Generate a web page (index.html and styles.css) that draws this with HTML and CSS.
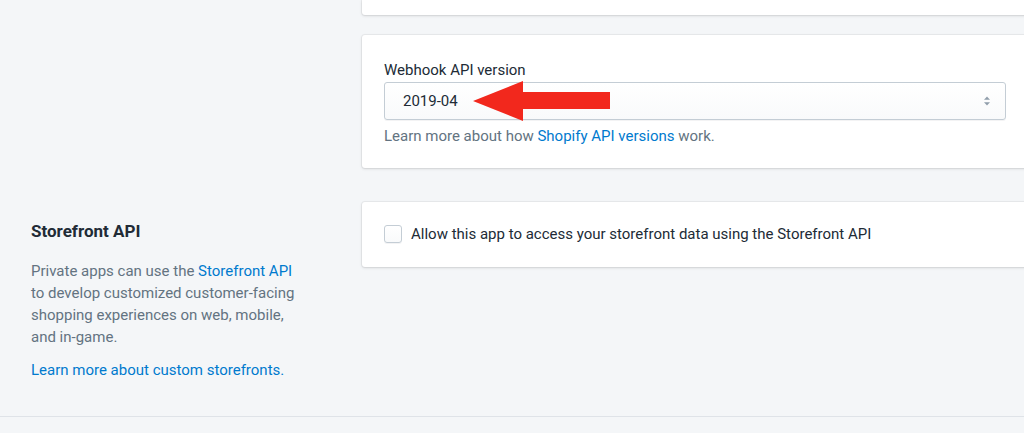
FILE: index.html
```html
<!DOCTYPE html>
<html lang="en">
<head>
<meta charset="utf-8">
<title>Private app settings</title>
<link rel="stylesheet" href="styles.css">
</head>
<body>
<div class="page">
  <section class="section section-top">
    <div class="annotation"></div>
    <div class="stack">
      <div class="card card-cut"></div>
      <div class="card card-body">
        <label class="label">Webhook API version</label>
        <div class="select-wrap">
          <div class="select">
            <span class="select-value">2019-04</span>
            <svg class="select-icon" width="8" height="12" viewBox="0 0 8 12"><path d="M4 1.5 L7 4.8 H1 Z" fill="#919eab"/><path d="M4 10.5 L7 7.2 H1 Z" fill="#919eab"/></svg>
          </div>
          <svg class="red-arrow" width="140" height="41" viewBox="0 0 140 41"><polygon points="0,20 50,0 50,11 137,11 137,28 50,28 50,40" fill="#f2281d"/></svg>
        </div>
        <p class="help">Learn more about how <a href="#" class="link">Shopify API versions</a> work.</p>
      </div>
    </div>
  </section>

  <section class="section section-storefront">
    <div class="annotation">
      <h2 class="heading">Storefront API</h2>
      <p class="desc">Private apps can use the <a href="#" class="link">Storefront API</a> to develop customized customer-facing shopping experiences on web, mobile, and in-game.</p>
      <p class="desc"><a href="#" class="link">Learn more about custom storefronts.</a></p>
    </div>
    <div class="stack">
      <div class="card card-check">
        <label class="check">
          <span class="checkbox"></span>
          <span class="check-label">Allow this app to access your storefront data using the Storefront API</span>
        </label>
      </div>
    </div>
  </section>
</div>
<div class="footer"></div>
</body>
</html>
```

FILE: styles.css
```css
html, body {
  margin: 0;
  padding: 0;
  overflow: hidden;
}
body {
  background: #f4f6f8;
  font-family: Roboto, "Noto Sans", Arial, sans-serif;
  font-size: 15px;
  line-height: 20px;
  color: #212b36;
  width: 1024px;
  height: 433px;
}
.page {
  padding-left: 31px;
  height: 416px;
  box-sizing: border-box;
}
.section {
  display: grid;
  grid-template-columns: 331px 666px;
}
.stack {
  display: flex;
  flex-direction: column;
  gap: 20px;
}
.card {
  background: #fff;
  border-radius: 3px;
  box-shadow: 0 0 0 1px rgba(63, 63, 68, 0.06), 0 1px 3px 0 rgba(63, 63, 68, 0.16);
}
.card-cut {
  height: 15px;
  border-top-left-radius: 0;
  border-top-right-radius: 0;
}
.card-body {
  padding: 25px 22px 22px 22px;
}
.label {
  display: block;
  margin-bottom: 2px;
}
.select-wrap {
  position: relative;
}
.select {
  height: 38px;
  box-sizing: border-box;
  border: 1px solid #c4cdd5;
  border-radius: 3px;
  background: linear-gradient(#ffffff, #f9fafb);
  box-shadow: 0 1px 0 0 rgba(22, 29, 37, 0.05);
  display: flex;
  align-items: center;
  justify-content: space-between;
  padding: 0 14px 0 18px;
}
.select-value {
  color: #212b36;
}
.red-arrow {
  position: absolute;
  left: 89px;
  top: -1px;
}
.help {
  margin: 6px 0 0 0;
  color: #637381;
}
.link {
  color: #007ace;
  text-decoration: none;
}
.section-storefront {
  margin-top: 34px;
}
.annotation {
  padding-top: 17px;
}
.heading {
  margin: 0 0 17px 0;
  font-size: 17px;
  line-height: 24px;
  font-weight: 700;
  color: #212b36;
}
.desc {
  margin: 0 0 11px 0;
  max-width: 272px;
  line-height: 22px;
  color: #637381;
}
.card-check {
  padding: 22px 22px 23px 22px;
}
.check {
  display: flex;
  align-items: center;
  gap: 9px;
}
.checkbox {
  width: 16px;
  height: 16px;
  border: 1px solid #c4cdd5;
  border-radius: 3px;
  background: linear-gradient(#ffffff, #f9fafb);
  box-shadow: 0 1px 0 0 rgba(22, 29, 37, 0.05);
  flex: none;
}
.footer {
  border-top: 1px solid #dfe3e8;
  height: 16px;
}
```
